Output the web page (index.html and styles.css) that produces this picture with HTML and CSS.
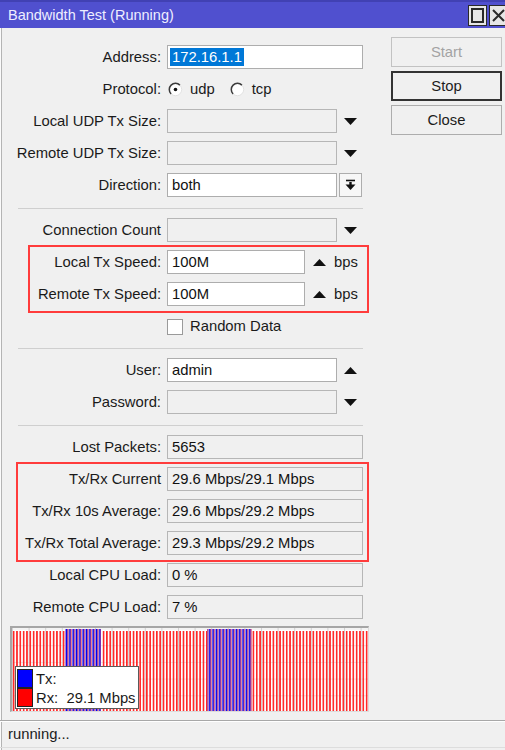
FILE: index.html
```html
<!DOCTYPE html>
<html>
<head>
<meta charset="utf-8">
<title>Bandwidth Test</title>
<link rel="stylesheet" href="styles.css">
</head>
<body>
<div class="window">
  <div class="titlebar">
    <span class="title">Bandwidth Test (Running)</span>
    <div class="tb-buttons">
      <span class="tb-btn"><svg width="15" height="17" viewBox="0 0 15 17"><rect x="2" y="2" width="11" height="13" fill="none" stroke="#2a2a2a" stroke-width="2"/></svg></span>
      <span class="tb-btn tb-close"><svg width="15" height="17" viewBox="0 0 15 17"><path d="M2 3 L13 14 M13 3 L2 14" stroke="#2a2a2a" stroke-width="2"/></svg></span>
    </div>
  </div>

  <div class="main">
    <div class="form">
      <div class="row">
        <span class="label">Address:</span>
        <span class="field w-full addr"><span class="sel">172.16.1.1</span></span>
      </div>
      <div class="row">
        <span class="label">Protocol:</span>
        <span class="radios">
          <span class="radio"><svg width="15" height="15" viewBox="0 0 15 15"><circle cx="7.5" cy="7.5" r="6.2" fill="#fff" stroke="#e2e2e2" stroke-width="1"/><path d="M3.1 11.9 A6.2 6.2 0 0 1 11.9 3.1" fill="none" stroke="#3c3c3c" stroke-width="1.5"/><circle cx="7.5" cy="7.5" r="1.8" fill="#111"/></svg>udp</span>
          <span class="radio"><svg width="15" height="15" viewBox="0 0 15 15"><circle cx="7.5" cy="7.5" r="6.2" fill="#fff" stroke="#e2e2e2" stroke-width="1"/><path d="M3.1 11.9 A6.2 6.2 0 0 1 11.9 3.1" fill="none" stroke="#3c3c3c" stroke-width="1.5"/></svg>tcp</span>
        </span>
      </div>
      <div class="row">
        <span class="label">Local UDP Tx Size:</span>
        <span class="field w-mid ro"></span>
        <span class="arrow"><svg width="13" height="7" viewBox="0 0 13 7"><path d="M0 0 H13 L6.5 7 Z" fill="#111"/></svg></span>
      </div>
      <div class="row">
        <span class="label">Remote UDP Tx Size:</span>
        <span class="field w-mid ro"></span>
        <span class="arrow"><svg width="13" height="7" viewBox="0 0 13 7"><path d="M0 0 H13 L6.5 7 Z" fill="#111"/></svg></span>
      </div>
      <div class="row">
        <span class="label">Direction:</span>
        <span class="field w-mid">both</span>
        <span class="dd-btn"><svg width="11" height="12" viewBox="0 0 11 12"><path d="M1 1.5 H10" stroke="#111" stroke-width="1.6"/><rect x="4.3" y="3" width="2.4" height="3" fill="#111"/><path d="M0.5 5.5 H10.5 L5.5 11 Z" fill="#111"/></svg></span>
      </div>

      <div class="sep"></div>

      <div class="row">
        <span class="label">Connection Count</span>
        <span class="field w-mid ro"></span>
        <span class="arrow"><svg width="13" height="7" viewBox="0 0 13 7"><path d="M0 0 H13 L6.5 7 Z" fill="#111"/></svg></span>
      </div>

      <div class="hl hl-speed">
        <div class="row">
          <span class="label">Local Tx Speed:</span>
          <span class="field w-speed">100M</span>
          <span class="up"><svg width="13" height="7" viewBox="0 0 13 7"><path d="M0 7 H13 L6.5 0 Z" fill="#111"/></svg></span>
          <span class="unit">bps</span>
        </div>
        <div class="row">
          <span class="label">Remote Tx Speed:</span>
          <span class="field w-speed">100M</span>
          <span class="up"><svg width="13" height="7" viewBox="0 0 13 7"><path d="M0 7 H13 L6.5 0 Z" fill="#111"/></svg></span>
          <span class="unit">bps</span>
        </div>
      </div>

      <div class="row">
        <span class="label"></span>
        <span class="check"></span>
        <span class="check-text">Random Data</span>
      </div>

      <div class="sep sep-tight"></div>

      <div class="row">
        <span class="label">User:</span>
        <span class="field w-mid">admin</span>
        <span class="arrow"><svg width="13" height="7" viewBox="0 0 13 7"><path d="M0 7 H13 L6.5 0 Z" fill="#111"/></svg></span>
      </div>
      <div class="row">
        <span class="label">Password:</span>
        <span class="field w-mid ro"></span>
        <span class="arrow"><svg width="13" height="7" viewBox="0 0 13 7"><path d="M0 0 H13 L6.5 7 Z" fill="#111"/></svg></span>
      </div>

      <div class="sep"></div>

      <div class="row">
        <span class="label">Lost Packets:</span>
        <span class="field w-full ro">5653</span>
      </div>

      <div class="hl hl-rate">
        <div class="row">
          <span class="label">Tx/Rx Current</span>
          <span class="field w-full ro">29.6 Mbps/29.1 Mbps</span>
        </div>
        <div class="row">
          <span class="label">Tx/Rx 10s Average:</span>
          <span class="field w-full ro">29.6 Mbps/29.2 Mbps</span>
        </div>
        <div class="row">
          <span class="label">Tx/Rx Total Average:</span>
          <span class="field w-full ro">29.3 Mbps/29.2 Mbps</span>
        </div>
      </div>

      <div class="row">
        <span class="label">Local CPU Load:</span>
        <span class="field w-full ro">0 %</span>
      </div>
      <div class="row">
        <span class="label">Remote CPU Load:</span>
        <span class="field w-full ro">7 %</span>
      </div>

      <div class="graph">
        <svg class="graph-svg" width="356" height="83" viewBox="0 0 356 83">
          <defs>
            <pattern id="grid" width="16.6" height="16.7" patternUnits="userSpaceOnUse" x="0" y="0.5">
              <path d="M0.5 0 V16.7 M0 0 H16.6" stroke="#d2d2d2" stroke-width="1" fill="none"/>
            </pattern>
            <pattern id="rx" width="3.33" height="83" patternUnits="userSpaceOnUse">
              <rect x="0.9" y="0" width="1.5" height="83" fill="#ff1414"/>
            </pattern>
            <pattern id="tx" width="3.33" height="83" patternUnits="userSpaceOnUse">
              <rect x="0.5" y="0" width="1.7" height="83" fill="#0000f0"/>
              <rect x="2.2" y="0" width="0.7" height="83" fill="#ff1a1a"/>
            </pattern>
          </defs>
          <rect x="0" y="0" width="356" height="83" fill="#fff"/>
          <rect x="0" y="0" width="356" height="83" fill="url(#grid)"/>
          <rect x="0" y="3" width="356" height="80" fill="url(#rx)"/>
          <rect x="53" y="1" width="36" height="82" fill="#e6e6fb"/>
          <rect x="53" y="1" width="36" height="82" fill="url(#tx)"/>
          <rect x="195" y="1" width="45" height="82" fill="#e6e6fb"/>
          <rect x="195" y="1" width="45" height="82" fill="url(#tx)"/>
        </svg>
        <div class="legend">
          <div class="legend-row"><span class="swatch sw-tx"></span><span>Tx:</span></div>
          <div class="legend-row"><span class="swatch sw-rx"></span><span>Rx:&nbsp; 29.1 Mbps</span></div>
        </div>
      </div>
    </div>

    <div class="actions">
      <span class="btn btn-disabled">Start</span>
      <span class="btn btn-default">Stop</span>
      <span class="btn">Close</span>
    </div>
  </div>

  <div class="status">running...</div>
</div>
</body>
</html>
```

FILE: styles.css
```css
* { box-sizing: border-box; }

html, body {
  margin: 0;
  padding: 0;
}

body {
  width: 505px;
  height: 750px;
  overflow: hidden;
  background: #f0f0f0;
  font-family: "Liberation Sans", Arial, sans-serif;
  font-size: 14.8px;
  color: #1a1a1a;
}

.window {
  width: 505px;
  height: 750px;
  display: flex;
  flex-direction: column;
  overflow: hidden;
  box-shadow: inset 1px 0 #fbfbfb, inset 2px 0 #b4b4b4;
}

/* Title bar */
.titlebar {
  height: 28px;
  flex: 0 0 28px;
  background: #5050cf;
  border-top: 2px solid #4141b3;
  display: flex;
  align-items: center;
  padding-left: 8px;
}

.title {
  color: #eeeeff;
  font-size: 14.5px;
  flex: 1;
  padding-bottom: 1px;
}

.tb-buttons {
  display: flex;
  gap: 2px;
  margin-right: -3px;
  align-self: flex-start;
  margin-top: 3px;
}

.tb-btn {
  width: 19px;
  height: 21px;
  background: #e6e6e6;
  border: 1px solid #2a2a2a;
  display: flex;
  align-items: center;
  justify-content: center;
}

/* Main area */
.main {
  display: flex;
  flex: 0 0 auto;
}

.form {
  width: 369px;
  padding: 17px 0 0 10px;
  display: flex;
  flex-direction: column;
  gap: 8px;
  --lw: 151px;
}

.row {
  display: flex;
  align-items: center;
  height: 24px;
}

.label {
  flex: 0 0 var(--lw);
  margin-right: 6px;
  text-align: right;
  white-space: nowrap;
}

.field {
  height: 24px;
  border: 1px solid #adadad;
  background: #ffffff;
  padding: 0 4px;
  display: flex;
  align-items: center;
  white-space: nowrap;
  color: #111;
}

.field.ro {
  background: #f0f0f0;
  border-color: #b6b6b6;
}

.w-full { width: 196px; }
.w-mid { width: 170px; }
.w-speed { width: 138px; }

.addr { padding-left: 2px; }

.sel {
  background: #0078d7;
  color: #fff;
  padding: 0 2px;
  height: 18px;
  line-height: 18px;
}

.arrow {
  width: 26px;
  display: flex;
  justify-content: center;
  padding-left: 1px;
}

.up {
  margin-left: 8px;
  display: flex;
}

.unit {
  margin-left: 8px;
}

.dd-btn {
  margin-left: 2px;
  width: 23px;
  height: 24px;
  border: 1px solid #adadad;
  background: #f7f7f7;
  display: flex;
  align-items: center;
  justify-content: center;
}

.radios {
  display: flex;
  align-items: center;
  gap: 14px;
}

.radio {
  display: flex;
  align-items: center;
  gap: 7px;
  margin-left: 1px;
}

.radio svg { display: block; }

.check {
  width: 16px;
  height: 16px;
  border: 1px solid #9a9a9a;
  background: #fff;
  margin-top: 1px;
}

.check-text {
  margin-left: 7px;
}

.sep {
  height: 1px;
  background: #cfcfcf;
  margin: 3px 0 1px 8px;
  width: 345px;
}

.sep-tight {
  margin-top: 2px;
}

/* Red highlight boxes */
.hl {
  border: 2px solid #ff3c3c;
  display: flex;
  flex-direction: column;
  gap: 8px;
  padding: 3px 0 5px 0;
  margin-top: -5px;
  margin-bottom: -7px;
}

.hl-speed {
  margin-left: 18px;
  --lw: 131px;
}

.hl-rate {
  margin-left: 6px;
  --lw: 143px;
}

/* Graph */
.graph {
  position: relative;
  width: 359px;
  height: 86px;
  margin-top: -1px;
  border-top: 2px solid #a6a6a6;
  border-left: 2px solid #a6a6a6;
  border-right: 1px solid #dcdcdc;
  border-bottom: 1px solid #dcdcdc;
  background: #fff;
}

.graph-svg { display: block; }

.legend {
  position: absolute;
  left: 3px;
  top: 38px;
  width: 124px;
  height: 43px;
  background: #fff;
  border: 1px solid #5a5a5a;
  padding: 2px 0 0 1px;
  display: flex;
  flex-direction: column;
}

.legend-row {
  display: flex;
  align-items: center;
  height: 19px;
  gap: 3px;
}

.swatch {
  width: 16px;
  height: 19px;
  border: 1px solid #222;
}

.sw-tx { background: #0000ff; }
.sw-rx { background: #ff0000; }

/* Buttons */
.actions {
  margin-left: 22px;
  padding-top: 9px;
  display: flex;
  flex-direction: column;
  gap: 4px;
  width: 111px;
}

.btn {
  height: 30px;
  border: 1px solid #adadad;
  background: #f0f0f0;
  display: flex;
  align-items: center;
  justify-content: center;
  color: #1c1c1c;
}

.btn-disabled {
  color: #a3a3a3;
  border-color: #c2c2c2;
}

.btn-default {
  border: 2px solid #333;
}

/* Status */
.status {
  margin-top: 8px;
  height: 28px;
  border-top: 1px solid #a8a8a8;
  border-bottom: 1px solid #dddddd;
  box-shadow: inset 0 1px #ffffff;
  padding-left: 8px;
  display: flex;
  align-items: center;
  color: #1c1c1c;
}
```
